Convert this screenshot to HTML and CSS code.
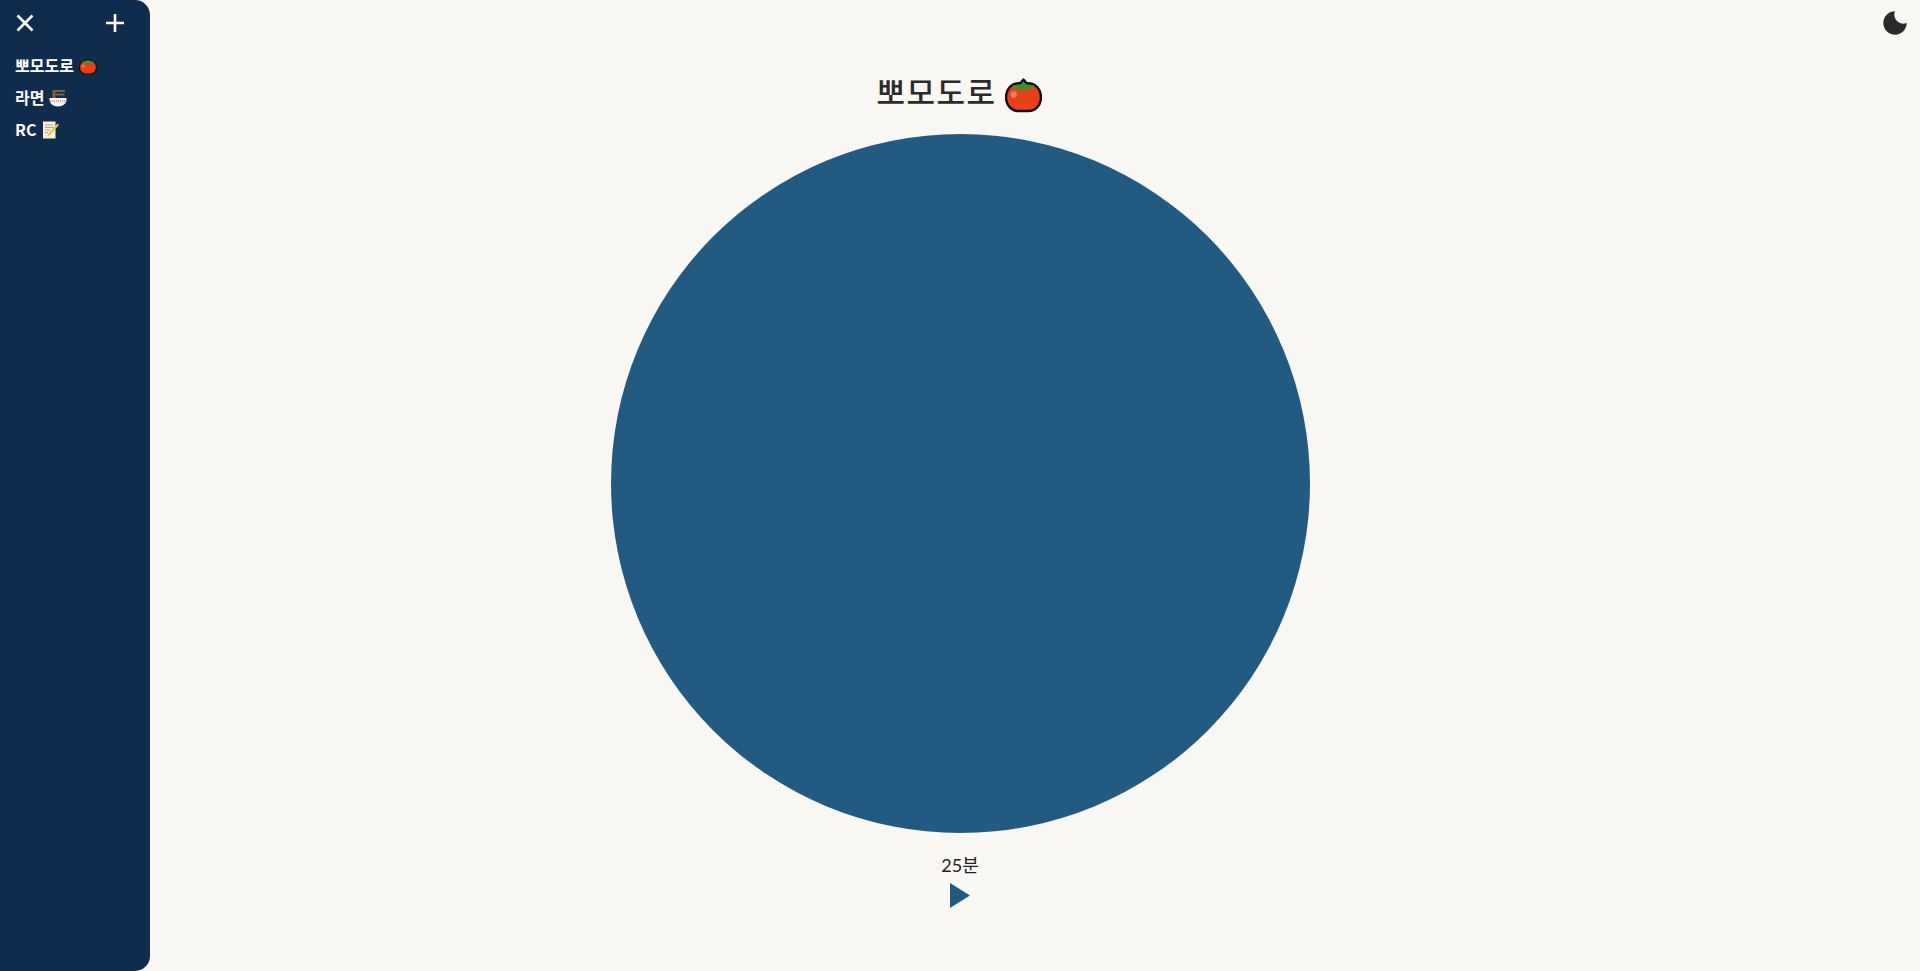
FILE: index.html
```html
<!DOCTYPE html>
<html lang="ko">
<head>
  <meta charset="UTF-8" />
  <meta name="viewport" content="width=device-width, initial-scale=1.0"/>
  <title>뽀모도로</title>
  <link rel="stylesheet" href="styles.css">
</head>
<body>

  <aside class="sidebar">
    <div class="sidebar-top">
      <svg class="icon-btn" viewBox="0 0 24 24" aria-label="close"><path d="M4.500 4.500L19.500 19.500M19.500 4.500L4.500 19.500"/></svg>
      <svg class="icon-btn" viewBox="0 0 24 24" aria-label="add"><path d="M12 3V21M3 12H21"/></svg>
    </div>
    <ul class="timer-list">
      <li>뽀모도로
        <svg class="emoji" viewBox="0 0 36 36"><use href="#tomato"/></svg>
      </li>
      <li>라면
        <svg class="emoji" viewBox="0 0 36 36"><use href="#ramen"/></svg>
      </li>
      <li>RC
        <svg class="emoji" viewBox="0 0 36 36"><use href="#memo"/></svg>
      </li>
    </ul>
  </aside>

  <button class="theme-btn" aria-label="theme">
    <svg viewBox="0 0 24 24"><path d="M12 0.300A11.700 11.700 0 1 0 23.700 12A9 9 0 0 1 12 0.300Z"/></svg>
  </button>

  <main class="timer">
    <h1 class="title">뽀모도로
      <svg class="title-emoji" viewBox="0 0 36 36"><use href="#tomato"/></svg>
    </h1>
    <div class="dial"></div>
    <p class="minutes">25분</p>
    <svg class="play" viewBox="0 0 20 25"><path d="M0 0L20 12.500L0 25Z"/></svg>
  </main>

  <svg class="defs" aria-hidden="true">
    <defs>
      <symbol id="tomato" viewBox="0 0 36 36">
        <path d="M18 3.500L21 7C30 6.500 35 13 35 21C35 29 29 34 23 34C20.500 34 15.500 34 13 34C7 34 1 29 1 21C1 13 6 6.500 15 7Z" fill="#e8401c" stroke="#111" stroke-width="2.400" stroke-linejoin="round"/>
        <path d="M18 5L21 9L29 9L23.500 13.500L19.500 12L18 16L16.500 12L12 13.500L7 9L15 9Z" fill="#2b9a2e"/>
        <ellipse cx="8.500" cy="18" rx="3" ry="3.200" fill="#f47a63"/>
      </symbol>
      <symbol id="ramen" viewBox="0 0 36 36">
        <path d="M7 2H32V6H13V20H7Z" fill="#7d6238"/>
        <path d="M13 9H31V13H13Z" fill="#7d6238"/>
        <path d="M1 18H35V21C35 29 28 35 18 35C8 35 1 29 1 21Z" fill="#f4f2ee"/>
        <path d="M2 24H34" stroke="#d0413a" stroke-width="2" stroke-dasharray="2 2"/>
      </symbol>
      <symbol id="memo" viewBox="0 0 36 36">
        <path d="M4 1H29V35H4Z" fill="#f5f1dc"/>
        <path d="M8 8H25M8 13H25M8 18H18M8 23H14" stroke="#a9a58f" stroke-width="2"/>
        <path d="M33 5L36 8L17 29L12 31L14 26Z" fill="#e8c24a"/>
      </symbol>
    </defs>
  </svg>

</body>
</html>
```
FILE: styles.css
```css
* { box-sizing: border-box; }
html, body { height: 100%; }
body {
  margin: 0;
  background: #f9f7f3;
  color: #222;
  font-family: "Lato", "Noto Sans CJK KR", sans-serif;
  overflow: hidden;
}
.defs {
  width: 0;
  height: 0;
  position: absolute;
}
.sidebar {
  position: fixed;
  top: 0;
  left: 0;
  bottom: 0;
  width: 150px;
  background: #102c4c;
  border-radius: 0 15px 15px 0;
  padding: 11px 15px;
  color: #fff;
}
.sidebar-top {
  display: flex;
  justify-content: space-between;
  align-items: center;
  padding-right: 8px;
}
.icon-btn {
  width: 24px;
  height: 24px;
  fill: none;
  stroke: #fff;
  stroke-width: 2.600;
}
.icon-btn:first-child {
  margin-left: -2px;
}
.timer-list {
  list-style: none;
  margin: 14px 0 0;
  padding: 0;
  font-size: 16px;
  font-weight: 700;
  font-family: "Noto Sans CJK KR", sans-serif;
}
.timer-list li {
  height: 32px;
  line-height: 32px;
  display: flex;
  align-items: center;
  gap: 5px;
}
.emoji {
  width: 18px;
  height: 18px;
  margin-top: 2px;
}
.theme-btn {
  position: fixed;
  top: 11px;
  right: 13px;
  width: 24px;
  height: 24px;
  padding: 0;
  border: none;
  background: none;
}
.theme-btn svg {
  display: block;
  width: 24px;
  height: 24px;
  fill: #2b2b2b;
}
.timer {
  display: flex;
  flex-direction: column;
  align-items: center;
}
.title {
  margin: 66px 0 0;
  padding-right: 2px;
  height: 68px;
  display: flex;
  align-items: flex-start;
  gap: 8px;
  font-size: 31px;
  line-height: 50px;
  font-weight: 500;
  letter-spacing: 1.500px;
  color: #2b2b2b;
  font-family: "Noto Sans CJK KR", sans-serif;
}
.title-emoji {
  width: 37px;
  height: 37px;
  margin-top: 10px;
}
.dial {
  width: 699px;
  height: 699px;
  border-radius: 50%;
  background: #235a81;
}
.minutes {
  margin: 21px 0 0;
  font-size: 18px;
  line-height: 22px;
}
.play {
  width: 20px;
  height: 25px;
  margin-top: 7px;
  fill: #235a81;
}
```
